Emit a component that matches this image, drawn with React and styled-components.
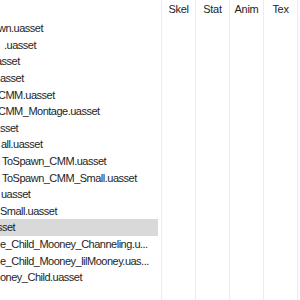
import styled, { createGlobalStyle } from "styled-components";

const GlobalStyle = createGlobalStyle`
  html, body {
    margin: 0;
    padding: 0;
    background: #ffffff;
    overflow: hidden;
  }
`;

// only the tail of each file name is in view, the list is scrolled sideways
const rows = [
  { name: "wn.uasset", shift: -2 },
  { name: ".uasset", shift: 4 },
  { name: "asset", shift: -4 },
  { name: "asset", shift: 0 },
  { name: "CMM.uasset", shift: -2 },
  { name: "CMM_Montage.uasset", shift: -2 },
  { name: "sset", shift: 0 },
  { name: "all.uasset", shift: 1 },
  { name: "ToSpawn_CMM.uasset", shift: 2 },
  { name: "ToSpawn_CMM_Small.uasset", shift: 2 },
  { name: "uasset", shift: 1 },
  { name: "Small.uasset", shift: 0 },
  { name: "sset", shift: -3, selected: true },
  { name: "e_Child_Mooney_Channeling.u...", shift: 0 },
  { name: "e_Child_Mooney_lilMooney.uas...", shift: 0 },
  { name: "oney_Child.uasset", shift: 0 },
];

const columns = ["Skel", "Stat", "Anim", "Tex"];

const App = () => {
  return (
    <>
      <GlobalStyle />
      <S.List>
        <S.HeaderRow>
          <S.NameHead />
          {columns.map((c) => (
            <S.ColHead key={c}>{c}</S.ColHead>
          ))}
          <S.Filler />
        </S.HeaderRow>
        {rows.map((r, i) => (
          <S.Row key={i}>
            <S.NameCell $selected={r.selected}>
              <S.Name $shift={r.shift}>{r.name}</S.Name>
            </S.NameCell>
            {columns.map((c) => (
              <S.Cell key={c} />
            ))}
            <S.Filler />
          </S.Row>
        ))}
        <S.Row>
          <S.NameCell />
          {columns.map((c) => (
            <S.Cell key={c} />
          ))}
          <S.Filler />
        </S.Row>
      </S.List>
    </>
  );
};

export default App;

const List = styled.div`
  width: 300px;
  height: 300px;
  overflow: hidden;
  display: flex;
  flex-direction: column;
  font-family: "Liberation Sans", Arial, sans-serif;
  font-size: 11px;
  color: #1e1e1e;
`;

const HeaderRow = styled.div`
  display: grid;
  grid-template-columns: 161px repeat(4, 34px) 1fr;
  height: 20px;
  flex-shrink: 0;
`;

const NameHead = styled.div``;

const ColHead = styled.div`
  border-left: 1px solid #eaeef3;
  display: flex;
  align-items: center;
  justify-content: center;
  padding-bottom: 2px;
  letter-spacing: -0.3px;
`;

const Filler = styled.div`
  border-left: 1px solid #eaeef3;
`;

const Row = styled.div`
  display: grid;
  grid-template-columns: 161px repeat(4, 34px) 1fr;
  height: 16.6px;
  flex-shrink: 0;
`;

const NameCell = styled.div`
  margin-right: 3px;
  background: ${({ $selected }) => ($selected ? "#d9d9d9" : "transparent")};
  overflow: hidden;
  white-space: nowrap;
  display: flex;
  align-items: center;
`;

const Name = styled.span`
  margin-left: ${({ $shift }) => $shift}px;
  letter-spacing: -0.5px;
  line-height: 16px;
`;

const Cell = styled.div`
  border-left: 1px solid #eaeef3;
`;

const S = {
  List,
  HeaderRow,
  NameHead,
  ColHead,
  Filler,
  Row,
  NameCell,
  Name,
  Cell,
};
